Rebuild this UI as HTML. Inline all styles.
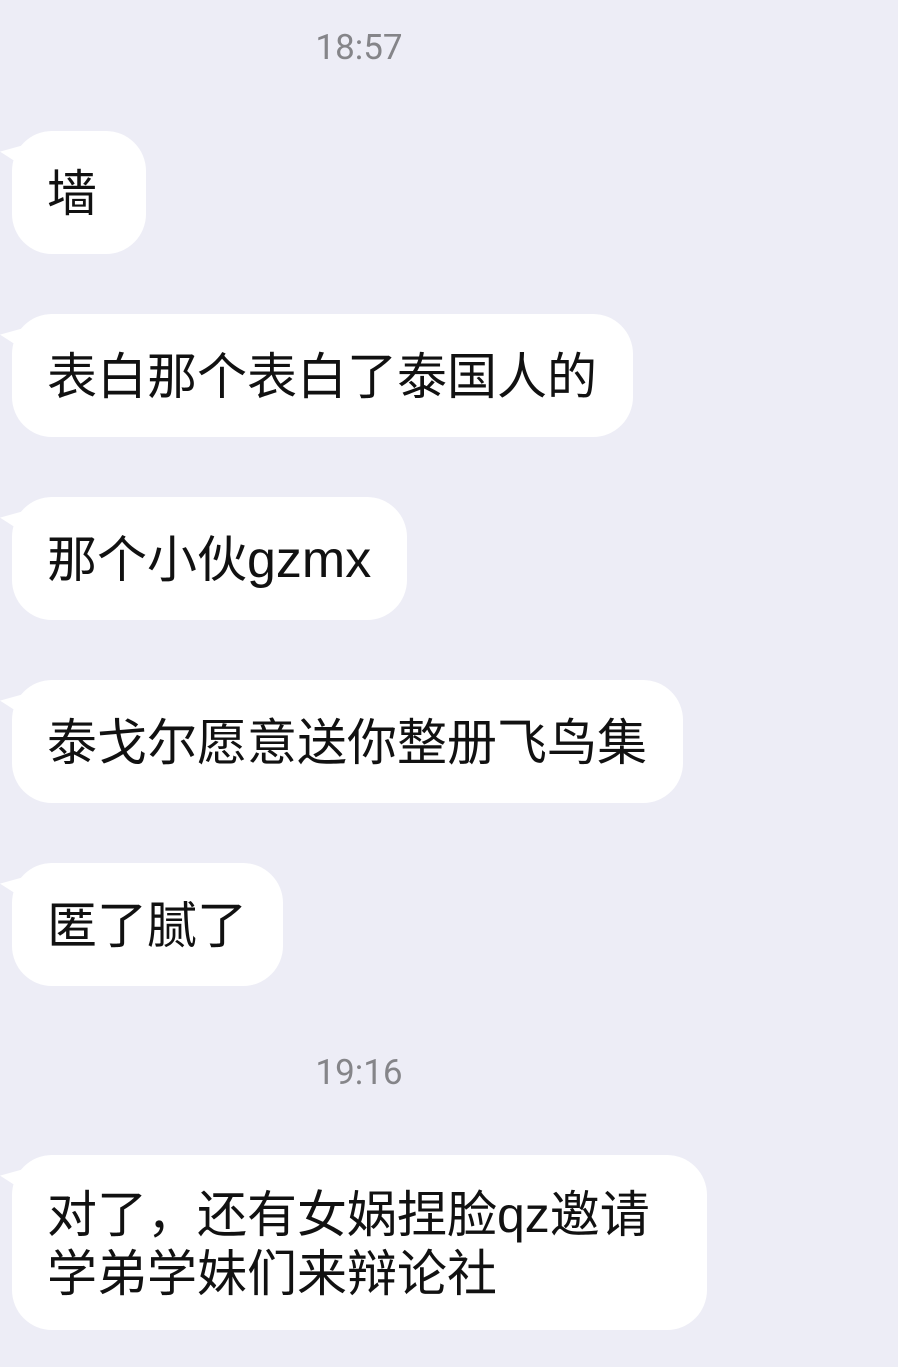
<!DOCTYPE html>
<html><head><meta charset="utf-8"><style>
html,body{margin:0;padding:0}
body{width:898px;height:1367px;background:#ededf6;position:relative;overflow:hidden;font-family:"Liberation Sans","Noto Sans CJK SC",sans-serif;}
.t{position:absolute;left:0;width:718px;text-align:center;font-size:35px;color:#858589;font-family:"Roboto","Liberation Sans",sans-serif;}
.b{position:absolute;left:12px;background:#fff;border-radius:40px;box-sizing:border-box;padding-left:35px;color:#111;font-size:50px;white-space:nowrap;}
.b:before{content:"";position:absolute;left:-12px;top:14px;width:24px;height:22px;background:#fff;clip-path:polygon(0 30%,100% 0,100% 100%);}
.s{height:123px;line-height:127px;}
</style></head><body>
<div class="t" style="top:28px;line-height:40px">18:57</div>
<div class="b s" style="top:131px;width:134px">墙</div>
<div class="b s" style="top:314px;width:621px">表白那个表白了泰国人的</div>
<div class="b s" style="top:497px;width:395px">那个小伙<span style="font-size:52px">gzmx</span></div>
<div class="b s" style="top:680px;width:671px">泰戈尔愿意送你整册飞鸟集</div>
<div class="b s" style="top:863px;width:271px">匿了腻了</div>
<div class="t" style="top:1053px;line-height:40px">19:16</div>
<div class="b" style="top:1155px;width:695px;height:175px;padding-top:31px;line-height:59px">对了，还有女娲捏脸qz邀请<br>学弟学妹们来辩论社</div>
</body></html>
